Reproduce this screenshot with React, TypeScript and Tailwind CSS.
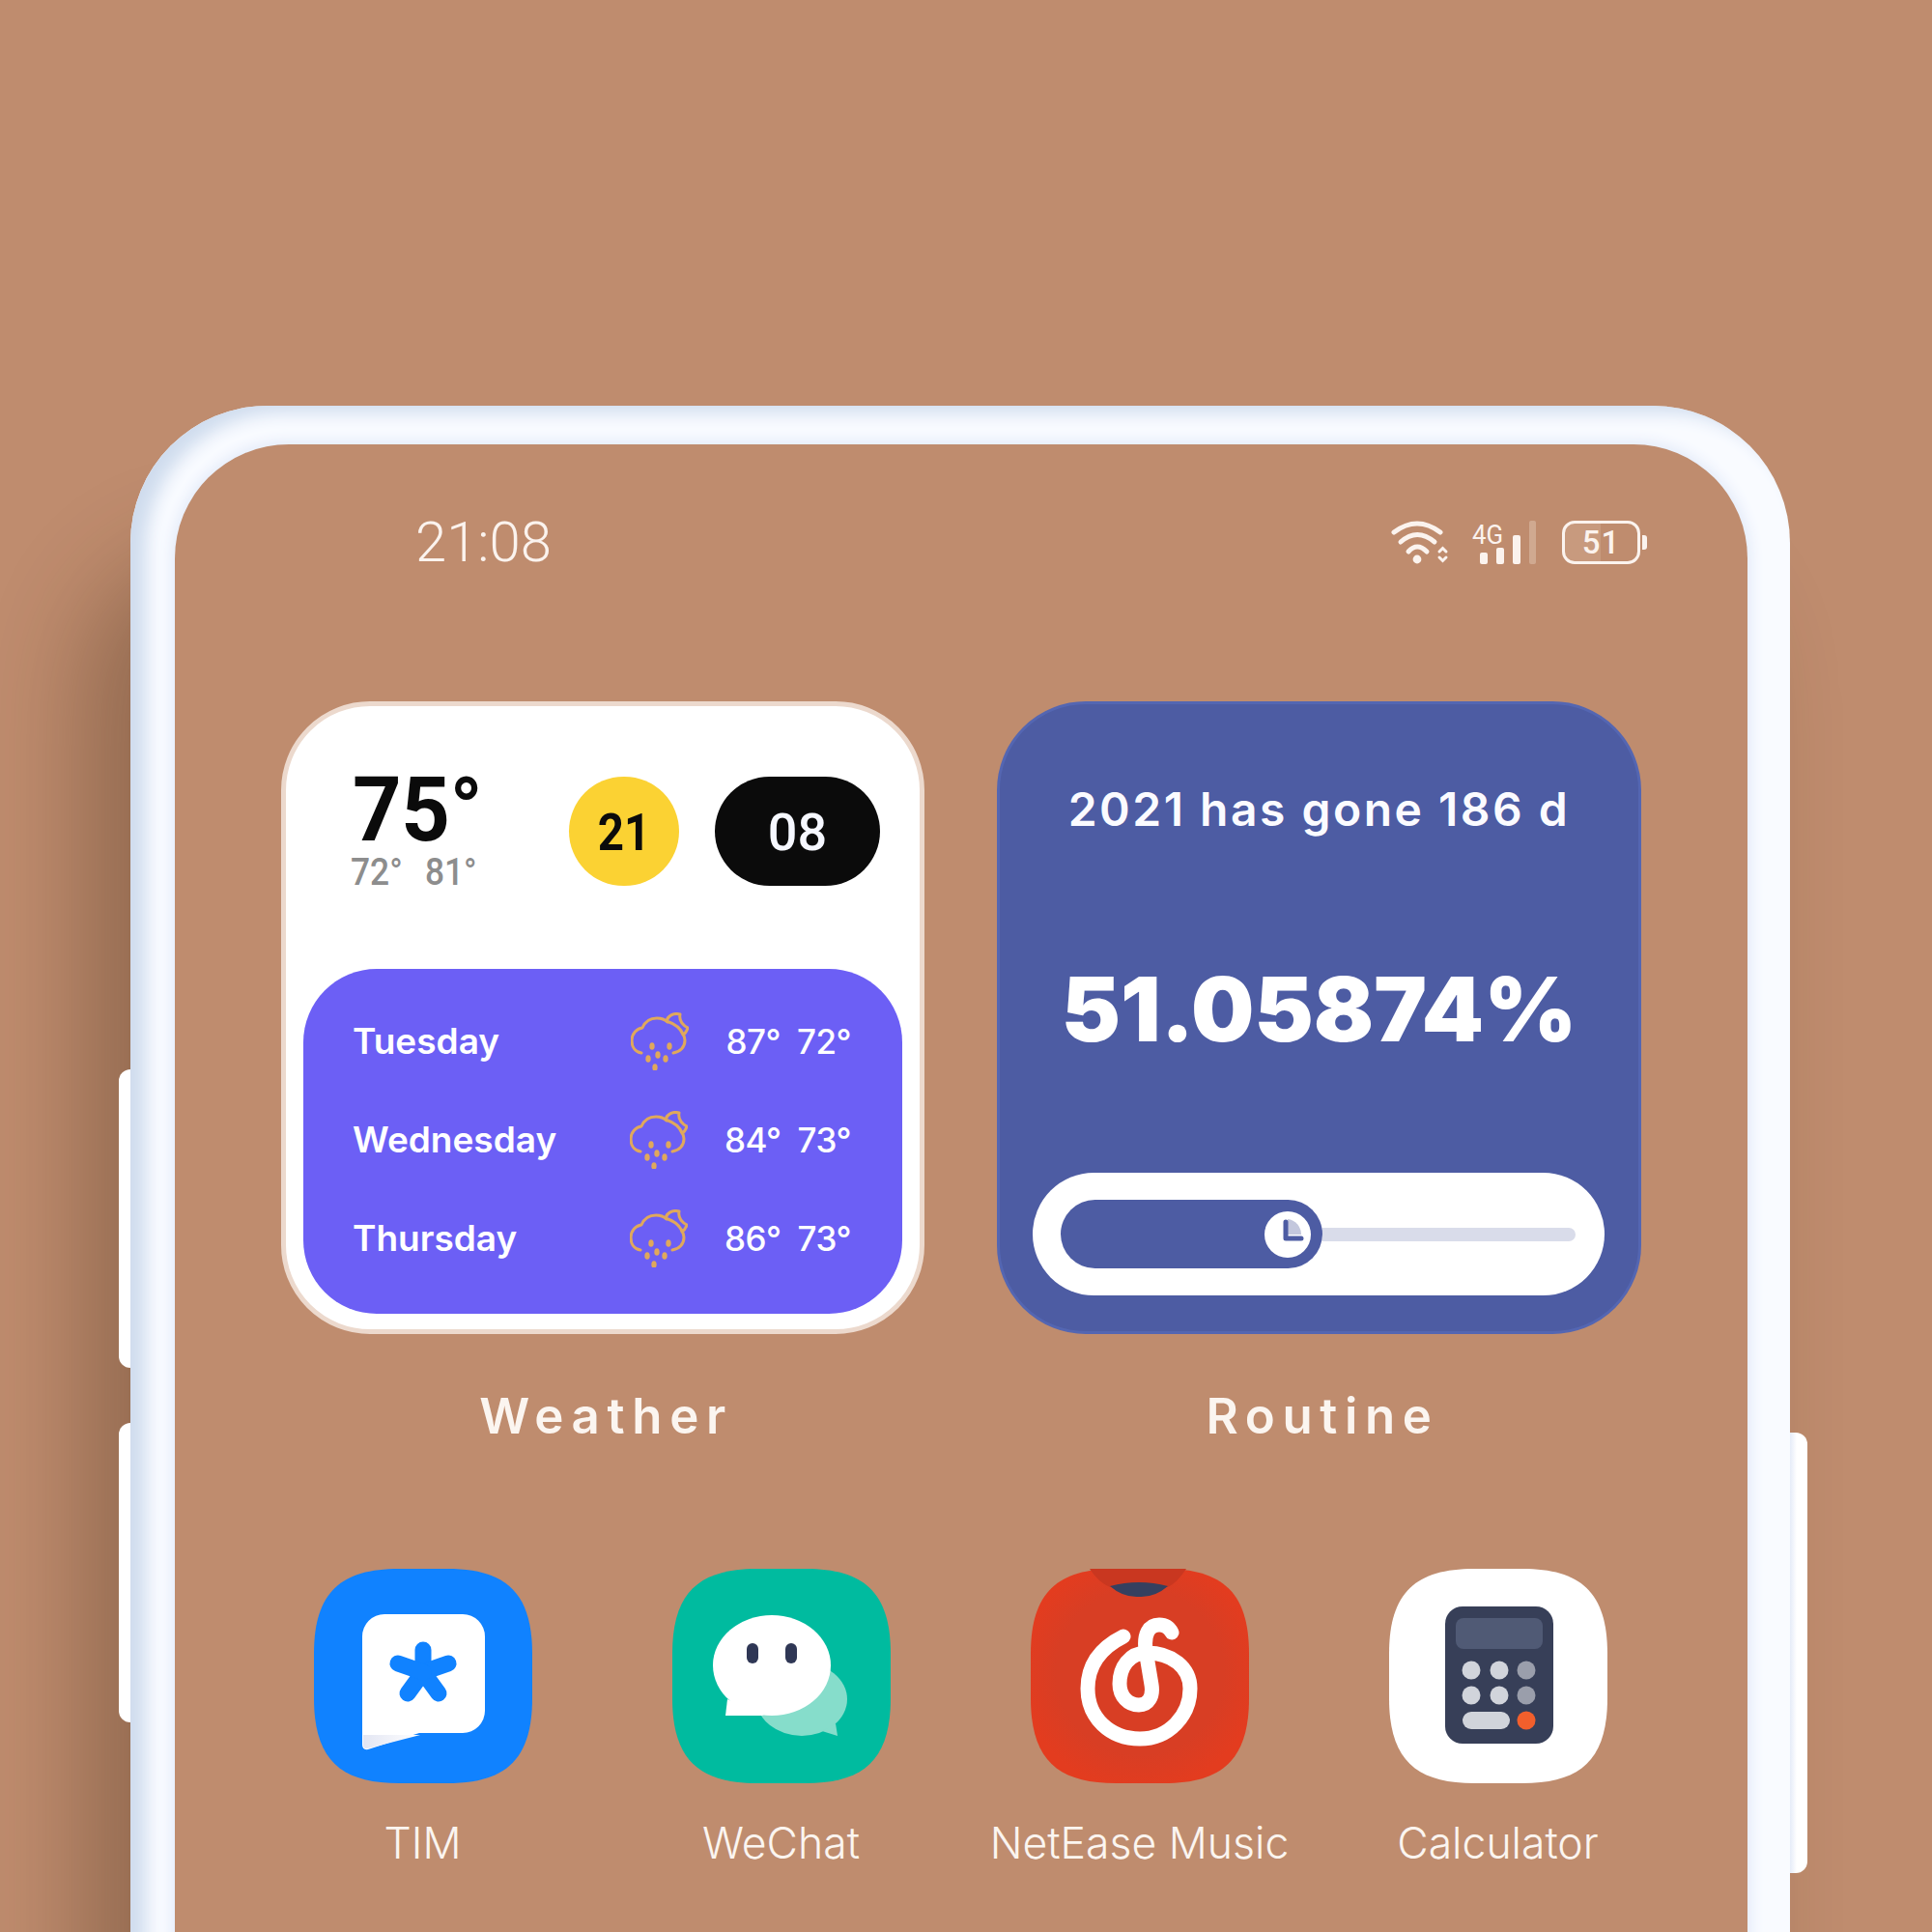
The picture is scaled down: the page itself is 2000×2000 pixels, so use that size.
const FORECAST = [
  { day: "Tuesday", high: "87°", low: "72°" },
  { day: "Wednesday", high: "84°", low: "73°" },
  { day: "Thursday", high: "86°", low: "73°" },
];

function Squircle({ fill }: { fill: string }) {
  return <path d="M0,88 C0,24 28,0 88,0 H138 C198,0 226,24 226,88 V134 C226,198 198,222 138,222 H88 C28,222 0,198 0,134 Z" fill={fill} />;
}

function TimIcon() {
  return (
    <svg viewBox="0 0 226 222" className="w-[226px] h-[222px]">
      <defs>
        <linearGradient id="tim-fold" x1="0" y1="0" x2="1" y2="0">
          <stop offset="0" stopColor="#e3e6f3" />
          <stop offset="1" stopColor="#ffffff" />
        </linearGradient>
      </defs>
      <Squircle fill="#1082ff" />
      <path d="M50,70 a23,23 0 0 1 23,-23 h81 a23,23 0 0 1 23,23 v77 a23,23 0 0 1 -23,23 h-45 L56,187 q-6,1 -6,-5 Z" fill="#fff" />
      <path d="M51,172 L110,172 L56,186 q-5,1 -5,-4 Z" fill="url(#tim-fold)" />
      <g stroke="#1082ff" strokeWidth="17" strokeLinecap="round">
        <path d="M113,107 L113,84" />
        <path d="M113,107 L139,98" />
        <path d="M113,107 L129,129" />
        <path d="M113,107 L97,129" />
        <path d="M113,107 L87,98" />
      </g>
    </svg>
  );
}

function WeChatIcon() {
  return (
    <svg viewBox="0 0 226 222" className="w-[226px] h-[222px]">
      <Squircle fill="#00bb9f" />
      <ellipse cx="134" cy="135" rx="47" ry="38" fill="#86ddcb" />
      <path d="M155,168 L171,173 L169,160 Z" fill="#86ddcb" />
      <ellipse cx="103" cy="100" rx="61" ry="52" fill="#fff" />
      <path d="M57,135 L55,152 L95,152 Z" fill="#fff" />
      <rect x="77" y="77" width="12" height="21" rx="6" fill="#2f3755" />
      <rect x="117" y="77" width="12" height="21" rx="6" fill="#2f3755" />
    </svg>
  );
}

function NetEaseIcon() {
  return (
    <svg viewBox="0 0 226 222" className="w-[226px] h-[222px]">
      <defs>
        <radialGradient id="ne-bg" cx="0.5" cy="0.48" r="0.55">
          <stop offset="0.7" stopColor="#d83e24" />
          <stop offset="1" stopColor="#e33c1f" />
        </radialGradient>
      </defs>
      <Squircle fill="url(#ne-bg)" />
      <path d="M61,0 H161 Q152,14 142,19 H82 Q70,14 61,0 Z" fill="#c93720" />
      <path d="M82,18 Q112,10 142,18 Q128,30 112,29 Q96,30 82,18 Z" fill="#35405f" />
      <path
        d="M96,70 C72,82 59,100 59,124 C59,154 82,176 113,176 C143,176 165,152 165,124 C165,102 146,87 120,87 C102,87 92,102 92,119 C92,132 101,141 112,141 C122,141 127,132 125,120 L119,84 C117,68 122,58 133,58 Q142,58 146,66"
        fill="none"
        stroke="#fff"
        strokeWidth="15"
        strokeLinecap="round"
      />
    </svg>
  );
}

function CalculatorIcon() {
  return (
    <svg viewBox="0 0 226 222" className="w-[226px] h-[222px]">
      <Squircle fill="#fff" />
      <rect x="58" y="39" width="112" height="142" rx="18" fill="#373f58" />
      <rect x="69" y="51" width="90" height="32" rx="8" fill="#505a75" />
      <circle cx="85" cy="105" r="9.5" fill="#d1d4db" />
      <circle cx="114" cy="105" r="9.5" fill="#d1d4db" />
      <circle cx="142" cy="105" r="9.5" fill="#9a9eab" />
      <circle cx="85" cy="131" r="9.5" fill="#d1d4db" />
      <circle cx="114" cy="131" r="9.5" fill="#d1d4db" />
      <circle cx="142" cy="131" r="9.5" fill="#9a9eab" />
      <rect x="76" y="148" width="49" height="18" rx="9" fill="#d1d4db" />
      <circle cx="142" cy="157" r="9.5" fill="#f25f2c" />
    </svg>
  );
}

const APPS = [
  { name: "TIM", icon: <TimIcon /> },
  { name: "WeChat", icon: <WeChatIcon /> },
  { name: "NetEase Music", icon: <NetEaseIcon /> },
  { name: "Calculator", icon: <CalculatorIcon /> },
];

function RainIcon() {
  return (
    <svg viewBox="0 0 60 60" className="w-[60px] h-[60px]" fill="none" stroke="#e0a85c" strokeWidth="3" strokeLinecap="round" strokeLinejoin="round">
      <path d="M11,42 C4,41 1,35 1,29 C1,22 6,17 12,16 C15,9 21,6 27,6 C31,6 35,7 38,10" />
      <path d="M44,42 C51,41 56,36 56,29 C56,26 55,24 54,22" />
      <path d="M37,9 C38,4 44,0 51,2 C50,7 52,12 59,16 C58,19 56,22 54,23 C52,17 46,12 37,9 Z" />
      <g fill="#e0a85c" stroke="none">
        <ellipse cx="22" cy="35" rx="2.7" ry="3.8" />
        <ellipse cx="40" cy="35" rx="2.7" ry="3.8" />
        <ellipse cx="18" cy="48" rx="2.7" ry="3.8" />
        <ellipse cx="28" cy="44" rx="2.7" ry="3.8" />
        <ellipse cx="36" cy="48" rx="2.7" ry="3.8" />
        <ellipse cx="25" cy="57" rx="2.7" ry="3.8" />
      </g>
    </svg>
  );
}

function WifiIcon() {
  return (
    <svg viewBox="0 0 60 45" className="w-[60px] h-[45px]" fill="none" stroke="#fbf3ee" strokeWidth="5" strokeLinecap="round">
      <path d="M3,12 Q27,-6 51,12" />
      <path d="M10,22 Q27,7 45,22" />
      <path d="M18,32 Q27,22 37,32" />
      <circle cx="27" cy="40" r="4.4" fill="#fbf3ee" stroke="none" />
      <path d="M50,32 L53.5,28.5 L57,32 M50,38 L53.5,41.5 L57,38" strokeWidth="3" />
    </svg>
  );
}

function ClockKnob() {
  return (
    <svg viewBox="0 0 48 48" className="w-[48px] h-[48px]">
      <circle cx="24" cy="24" r="24" fill="#fff" />
      <path d="M24,8 A16,16 0 0 1 38,24 L24,24 Z" fill="#c3c7dd" />
      <path d="M22,11 L22,28 L38,28" fill="none" stroke="#4d5ca3" strokeWidth="5" strokeLinecap="round" strokeLinejoin="round" />
    </svg>
  );
}

export default function App() {
  return (
    <div className="w-[2000px] h-[2000px] overflow-hidden bg-[#bf8c6e] pt-[420px] pl-[135px]">
      <div className="relative w-[1718px] h-[1700px] rounded-t-[142px] bg-[#f9fbff] pl-[46px] pr-[44px] pt-[40px] shadow-[-50px_150px_100px_rgba(60,40,20,0.33),inset_16px_7px_18px_#cfdcee]">
        {/* side buttons */}
        <div className="absolute left-[-12px] top-[687px] w-[12px] h-[309px] rounded-l-[12px] bg-white" />
        <div className="absolute left-[-12px] top-[1053px] w-[12px] h-[310px] rounded-l-[12px] bg-white" />
        <div className="absolute right-[-18px] top-[1063px] w-[18px] h-[456px] rounded-r-[12px] bg-gradient-to-r from-[#e6ecf8] to-white to-40%" />

        {/* screen */}
        <div className="h-[1660px] rounded-t-[118px] bg-[#bf8c6e] shadow-[0_0_14px_4px_#e4ebf9] [font-family:Inter,sans-serif]">
          {/* status bar */}
          <div className="flex items-center justify-between pt-[78px] pl-[249px] pr-[104px] h-[124px]">
            <span className="[font-family:Roboto,sans-serif] font-light text-[58px] leading-none text-[#fbf3ee]">21:08</span>
            <div className="flex items-center">
              <WifiIcon />
              <div className="relative w-[67px] h-[45px] ml-[23px]">
                <span className="absolute left-[1px] top-[1px] [font-family:Roboto,sans-serif] text-[28px] leading-none text-[#fbf3ee] origin-left scale-x-[0.92]">4G</span>
                <div className="absolute left-[9px] bottom-0 flex items-end gap-[9px]">
                  <div className="w-[8px] h-[12px] rounded-[2px] bg-[#fbf3ee]" />
                  <div className="w-[8px] h-[17px] rounded-[2px] bg-[#fbf3ee]" />
                  <div className="w-[8px] h-[30px] rounded-[2px] bg-[#fbf3ee]" />
                  <div className="w-[7px] h-[45px] rounded-[2px] bg-[#d0a990]" />
                </div>
              </div>
              <div className="flex items-center ml-[27px]">
                <div className="flex items-center justify-center w-[81px] h-[45px] rounded-[13px] border-[3.5px] border-[#fbf3ee] bg-gradient-to-r from-[#c89a7e] from-50% to-transparent to-50% [font-family:Roboto,sans-serif] text-[33px] font-medium leading-none tracking-[1px] text-[#fbf3ee]">
                  51
                </div>
                <div className="w-[5px] h-[15px] ml-[2px] rounded-r-[3px] bg-[#fbf3ee]" />
              </div>
            </div>
          </div>

          {/* widgets */}
          <div className="grid grid-cols-[666px_667px] gap-x-[75px] mt-[142px] pl-[110px]">
            <div className="h-[655px] rounded-[92px] bg-white border-[5px] border-[#ecd9cd] pt-[72px]">
              <div className="flex h-[200px] pl-[69px]">
                <div className="w-[224px] [font-family:Roboto,sans-serif]">
                  <div className="text-[92px] font-bold leading-[72px] origin-left scale-x-[0.96] text-[#0b0b0b] tracking-[-0.5px]">75°</div>
                  <div className="flex gap-[25px] text-[38px] font-medium leading-none text-[#8d8d8d] mt-[9px] -ml-[2px] origin-left scale-x-[0.93]">
                    <span>72°</span>
                    <span>81°</span>
                  </div>
                </div>
                <div className="flex items-center justify-center w-[114px] h-[113px] mt-[1px] rounded-full bg-[#fbd233] [font-family:Roboto,sans-serif] font-bold text-[54px] leading-none text-[#0b0b0b]">
                  <span className="mt-[3px] scale-x-[0.88]">21</span>
                </div>
                <div className="flex items-center justify-center w-[171px] h-[113px] mt-[1px] ml-[37px] rounded-full bg-[#0b0b0b] [font-family:Roboto,sans-serif] font-medium text-[54px] leading-none text-[#f6f8ff]">
                  <span className="mt-[3px]">08</span>
                </div>
              </div>
              <div className="mx-[18px] h-[357px] rounded-[76px] bg-[#6c5ff5] px-[51px] pr-[53px] pt-[24px]">
                {FORECAST.map((row) => (
                  <div key={row.day} className="flex items-center justify-between h-[102px] text-[37px] font-semibold text-white">
                    <span>{row.day}</span>
                    <div className="flex items-center">
                      <RainIcon />
                      <div className="flex gap-[17px] ml-[38px] text-[35px] font-medium tracking-[-0.5px]">
                        <span>{row.high}</span>
                        <span>{row.low}</span>
                      </div>
                    </div>
                  </div>
                ))}
              </div>
            </div>

            <div className="flex flex-col items-center h-[655px] rounded-[92px] bg-[#4d5ca3] border-[3px] border-[#5466b2] pt-[77px]">
              <div className="text-[48px] font-semibold leading-[64px] tracking-[2.5px] text-[#fbfbff] whitespace-nowrap">2021 has gone 186 d</div>
              <div className="mt-[119px] text-[92px] font-black leading-[112px] text-white">51.05874%</div>
              <div className="flex items-center w-[592px] h-[127px] mt-[113px] mr-[2px] rounded-full bg-white pl-[29px] pr-[30px]">
                <div className="flex items-center justify-end w-[271px] h-[71px] rounded-full bg-[#4d5ca3] pr-[12px] shrink-0">
                  <ClockKnob />
                </div>
                <div className="flex-1 h-[14px] rounded-r-full bg-[#d9dcea]" />
              </div>
            </div>
          </div>

          {/* widget captions */}
          <div className="grid grid-cols-[666px_667px] gap-x-[75px] mt-[55px] pl-[110px] text-center text-[51px] font-semibold leading-[60px] tracking-[0.15em] indent-[7px] text-[#fbf5f0]">
            <span>Weather</span>
            <span>Routine</span>
          </div>

          {/* app row */}
          <div className="grid grid-cols-[371px_371px_371px_371px] mt-[128px] pl-[71px]">
            {APPS.map((app) => (
              <div key={app.name} className="flex flex-col items-center">
                {app.icon}
                <span className="mt-[34px] font-light text-[44.5px] leading-[56px] text-[#fbf5f0] whitespace-nowrap">{app.name}</span>
              </div>
            ))}
          </div>
        </div>
      </div>
    </div>
  );
}
